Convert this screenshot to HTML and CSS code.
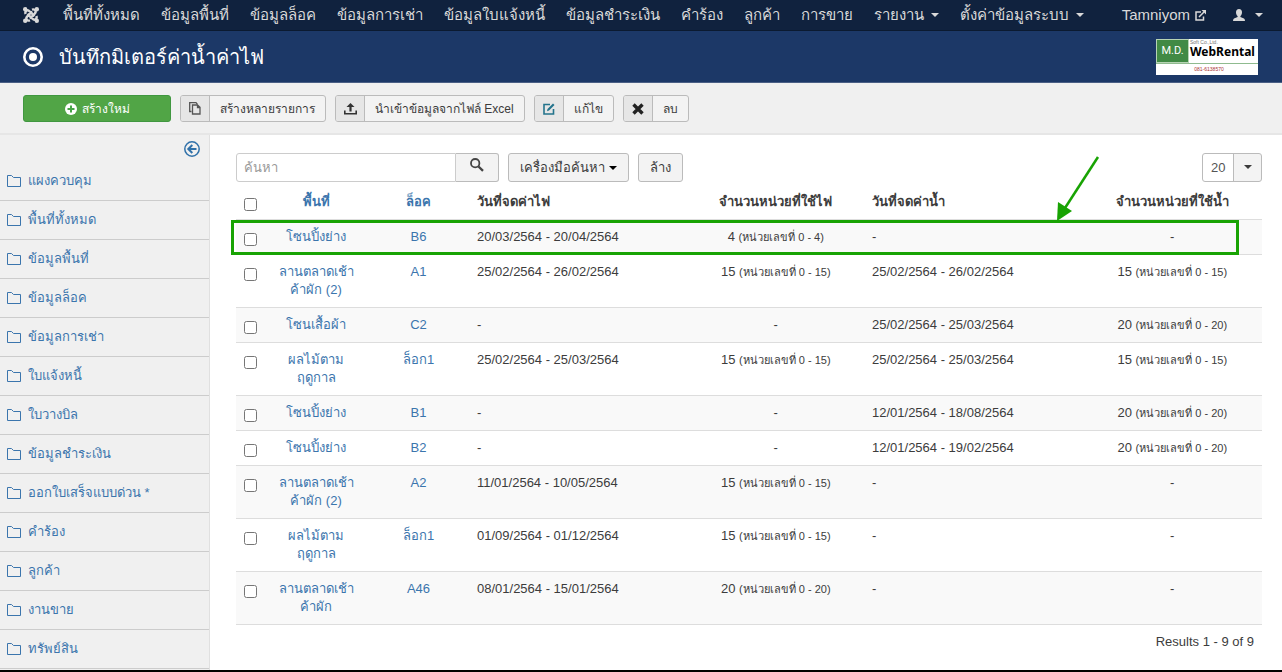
FILE: index.html
```html
<!DOCTYPE html>
<html lang="th">
<head>
<meta charset="utf-8">
<meta name="viewport" content="width=device-width, initial-scale=1">
<title>บันทึกมิเตอร์ค่าน้ำค่าไฟ</title>
<link rel="stylesheet" href="styles.css">
</head>
<body>
<svg class="defs" aria-hidden="true">
  <symbol id="folder" viewBox="0 0 14 12"><path d="M.5 11.500V.5H4.500L6.500 2.500H13.500V11.500Z" fill="none" stroke="currentColor"/></symbol>
</svg>
<nav class="navbar">
  <a class="brand" href="#" aria-label="Joomla">
    <svg width="16" height="16" viewBox="0 0 16 16" fill="none" stroke="currentColor" stroke-width="2.400">
      <g fill="currentColor" stroke="none"><circle cx="2.200" cy="2.200" r="2.200"/><circle cx="13.800" cy="2.200" r="2.200"/><circle cx="2.200" cy="13.800" r="2.200"/><circle cx="13.800" cy="13.800" r="2.200"/></g>
      <path d="M2.600 7C1.600 4 4.300 2 6.800 4.500L11.500 9.200M9 2.600C12 1.600 14 4.300 11.500 6.800L6.800 11.500M13.400 9C14.400 12 11.700 14 9.200 11.500L4.500 6.800M7 13.400C4 14.400 2 11.700 4.500 9.200L9.200 4.500"/>
    </svg>
  </a>
  <ul class="menu">
    <li><a href="#">พื้นที่ทั้งหมด</a></li>
    <li><a href="#">ข้อมูลพื้นที่</a></li>
    <li><a href="#">ข้อมูลล็อค</a></li>
    <li><a href="#">ข้อมูลการเช่า</a></li>
    <li><a href="#">ข้อมูลใบแจ้งหนี้</a></li>
    <li><a href="#">ข้อมูลชำระเงิน</a></li>
    <li><a href="#">คำร้อง</a></li>
    <li><a href="#">ลูกค้า</a></li>
    <li><a href="#">การขาย</a></li>
    <li><a href="#">รายงาน<span class="caret"></span></a></li>
    <li><a href="#">ตั้งค่าข้อมูลระบบ<span class="caret"></span></a></li>
  </ul>
  <div class="account">
    <a href="#">Tamniyom
      <svg width="11" height="11" viewBox="0 0 11 11" fill="none" stroke="currentColor" stroke-width="1.500"><path d="M6 2H1V10H8.500V6.500M4 7L9 2"/><path d="M6.500 0H11V4.500Z" fill="currentColor" stroke="none"/></svg>
    </a>
    <a href="#" aria-label="บัญชีผู้ใช้">
      <svg width="12" height="12" viewBox="0 0 12 12" fill="currentColor"><path d="M6 0C8 0 9 1.300 9 3.200C9 5 8.300 6.300 7.400 7V8L11 9.500Q12 10 12 12H0Q0 10 1 9.500L4.600 8V7C3.700 6.300 3 5 3 3.200C3 1.300 4 0 6 0Z"/></svg>
      <span class="caret"></span>
    </a>
  </div>
</nav>
<header class="header">
  <svg width="20" height="20" viewBox="0 0 20 20"><circle cx="10" cy="10" r="8.700" fill="none" stroke="#fff" stroke-width="2.600"/><circle cx="10" cy="10" r="4" fill="#fff"/></svg>
  <h1>บันทึกมิเตอร์ค่าน้ำค่าไฟ</h1>
  <div class="logo">
    <span class="logo-md">M.D.</span>
    <span class="logo-name"><small>Soft Co.,Ltd.</small><b>WebRental</b></span>
    <span class="logo-phone">081-6138570</span>
  </div>
</header>
<div class="toolbar">
  <button class="btn-new" type="button">
    <svg width="12" height="12" viewBox="0 0 12 12"><circle cx="6" cy="6" r="6" fill="#fff"/><path d="M6 2.500V9.500M2.500 6H9.500" stroke="#46a546" stroke-width="2"/></svg>
    สร้างใหม่
  </button>
  <button class="btn-tool" type="button">
    <span class="ico"><svg width="12" height="13" viewBox="0 0 12 13" fill="none" stroke="#555" stroke-width="1.300"><path d="M2.500 9.500H.7V.7H7L8.500 2.500"/><path d="M3.500 3H8.500L11 5.300V12H3.500ZM8.500 3V5.500H11"/></svg></span><span class="txt">สร้างหลายรายการ</span>
  </button>
  <button class="btn-tool" type="button">
    <span class="ico"><svg width="13" height="12" viewBox="0 0 13 12" fill="#333"><path d="M6.500 0L10.500 4H7.600V8.500H5.400V4H2.500ZM0 7.500H1.600V10H11.400V7.500H13V11.600H0Z"/></svg></span><span class="txt">นำเข้าข้อมูลจากไฟล์ Excel</span>
  </button>
  <button class="btn-tool" type="button">
    <span class="ico"><svg width="12" height="12" viewBox="0 0 12 12" fill="none" stroke="#24748c" stroke-width="1.600"><path d="M7 1.500H1V11H10.500V6"/><path d="M4 8.300L4.500 6L10 .5L11.500 2L6 7.500Z" fill="#24748c" stroke="none"/></svg></span><span class="txt">แก้ไข</span>
  </button>
  <button class="btn-tool" type="button">
    <span class="ico"><svg width="12" height="12" viewBox="0 0 12 12"><path d="M1.500 1.500L10.500 10.500M10.500 1.500L1.500 10.500" stroke="#222" stroke-width="3.400"/></svg></span><span class="txt">ลบ</span>
  </button>
</div>
<div class="content">
  <aside class="sidebar">
    <button class="collapse" type="button" aria-label="ซ่อนแถบข้าง">
      <svg width="16" height="16" viewBox="0 0 16 16" fill="none" stroke="currentColor"><circle cx="8" cy="8" r="7.200" stroke-width="1.500"/><path d="M12.500 8H4.500M8.300 4L4.300 8L8.300 12" stroke-width="2"/></svg>
    </button>
    <ul>
      <li><a href="#"><svg><use href="#folder"/></svg>แผงควบคุม</a></li>
      <li><a href="#"><svg><use href="#folder"/></svg>พื้นที่ทั้งหมด</a></li>
      <li><a href="#"><svg><use href="#folder"/></svg>ข้อมูลพื้นที่</a></li>
      <li><a href="#"><svg><use href="#folder"/></svg>ข้อมูลล็อค</a></li>
      <li><a href="#"><svg><use href="#folder"/></svg>ข้อมูลการเช่า</a></li>
      <li><a href="#"><svg><use href="#folder"/></svg>ใบแจ้งหนี้</a></li>
      <li><a href="#"><svg><use href="#folder"/></svg>ใบวางบิล</a></li>
      <li><a href="#"><svg><use href="#folder"/></svg>ข้อมูลชำระเงิน</a></li>
      <li><a href="#"><svg><use href="#folder"/></svg>ออกใบเสร็จแบบด่วน *</a></li>
      <li><a href="#"><svg><use href="#folder"/></svg>คำร้อง</a></li>
      <li><a href="#"><svg><use href="#folder"/></svg>ลูกค้า</a></li>
      <li><a href="#"><svg><use href="#folder"/></svg>งานขาย</a></li>
      <li><a href="#"><svg><use href="#folder"/></svg>ทรัพย์สิน</a></li>
    </ul>
  </aside>
  <main class="main">
    <form class="filters">
      <div class="search">
        <input type="text" placeholder="ค้นหา" aria-label="ค้นหา">
        <button type="button" aria-label="ค้นหา"><svg width="14" height="14" viewBox="0 0 14 14" fill="none" stroke="#444"><circle cx="5.200" cy="5.200" r="4.200" stroke-width="1.800"/><path d="M8.500 8.500L13 12.800" stroke-width="2.400"/></svg></button>
      </div>
      <button class="btn" type="button">เครื่องมือค้นหา<span class="caret"></span></button>
      <button class="btn" type="button">ล้าง</button>
      <div class="limit"><select aria-label="จำนวนต่อหน้า"><option>20</option></select><span class="caret"></span></div>
    </form>
    <div class="results">
      <table>
        <colgroup><col class="c-check"><col class="c-area"><col class="c-lock"><col class="c-date"><col class="c-unit"><col class="c-date"><col></colgroup>
        <thead>
          <tr><th><input type="checkbox" aria-label="เลือกทั้งหมด"></th><th><a href="#">พื้นที่</a></th><th><a href="#">ล็อค</a></th><th class="left">วันที่จดค่าไฟ</th><th>จำนวนหน่วยที่ใช้ไฟ</th><th class="left">วันที่จดค่าน้ำ</th><th>จำนวนหน่วยที่ใช้น้ำ</th></tr>
        </thead>
        <tbody>
          <tr><td><input type="checkbox" aria-label="เลือก B6"></td><td><a href="#">โซนปิ้งย่าง</a></td><td><a href="#">B6</a></td><td class="left">20/03/2564 - 20/04/2564</td><td>4 <small>(หน่วยเลขที่ 0 - 4)</small></td><td class="left">-</td><td>-</td></tr>
          <tr><td><input type="checkbox" aria-label="เลือก A1"></td><td><a href="#">ลานตลาดเช้าค้าผัก (2)</a></td><td><a href="#">A1</a></td><td class="left">25/02/2564 - 26/02/2564</td><td>15 <small>(หน่วยเลขที่ 0 - 15)</small></td><td class="left">25/02/2564 - 26/02/2564</td><td>15 <small>(หน่วยเลขที่ 0 - 15)</small></td></tr>
          <tr><td><input type="checkbox" aria-label="เลือก C2"></td><td><a href="#">โซนเสื้อผ้า</a></td><td><a href="#">C2</a></td><td class="left">-</td><td>-</td><td class="left">25/02/2564 - 25/03/2564</td><td>20 <small>(หน่วยเลขที่ 0 - 20)</small></td></tr>
          <tr><td><input type="checkbox" aria-label="เลือก ล็อก1"></td><td><a href="#">ผลไม้ตามฤดูกาล</a></td><td><a href="#">ล็อก1</a></td><td class="left">25/02/2564 - 25/03/2564</td><td>15 <small>(หน่วยเลขที่ 0 - 15)</small></td><td class="left">25/02/2564 - 25/03/2564</td><td>15 <small>(หน่วยเลขที่ 0 - 15)</small></td></tr>
          <tr><td><input type="checkbox" aria-label="เลือก B1"></td><td><a href="#">โซนปิ้งย่าง</a></td><td><a href="#">B1</a></td><td class="left">-</td><td>-</td><td class="left">12/01/2564 - 18/08/2564</td><td>20 <small>(หน่วยเลขที่ 0 - 20)</small></td></tr>
          <tr><td><input type="checkbox" aria-label="เลือก B2"></td><td><a href="#">โซนปิ้งย่าง</a></td><td><a href="#">B2</a></td><td class="left">-</td><td>-</td><td class="left">12/01/2564 - 19/02/2564</td><td>20 <small>(หน่วยเลขที่ 0 - 20)</small></td></tr>
          <tr><td><input type="checkbox" aria-label="เลือก A2"></td><td><a href="#">ลานตลาดเช้าค้าผัก (2)</a></td><td><a href="#">A2</a></td><td class="left">11/01/2564 - 10/05/2564</td><td>15 <small>(หน่วยเลขที่ 0 - 15)</small></td><td class="left">-</td><td>-</td></tr>
          <tr><td><input type="checkbox" aria-label="เลือก ล็อก1"></td><td><a href="#">ผลไม้ตามฤดูกาล</a></td><td><a href="#">ล็อก1</a></td><td class="left">01/09/2564 - 01/12/2564</td><td>15 <small>(หน่วยเลขที่ 0 - 15)</small></td><td class="left">-</td><td>-</td></tr>
          <tr><td><input type="checkbox" aria-label="เลือก A46"></td><td><a href="#">ลานตลาดเช้าค้าผัก</a></td><td><a href="#">A46</a></td><td class="left">08/01/2564 - 15/01/2564</td><td>20 <small>(หน่วยเลขที่ 0 - 20)</small></td><td class="left">-</td><td>-</td></tr>
        </tbody>
      </table>
      <div class="highlight"></div>
      <svg class="arrow" width="44" height="66" viewBox="0 0 44 66"><path d="M42 1L9 52" stroke="#18a303" stroke-width="2.500"/><path d="M1 65L2 46L16 55Z" fill="#18a303"/></svg>
    </div>
    <p class="count">Results 1 - 9 of 9</p>
  </main>
</div>
</body>
</html>
```
FILE: styles.css
```css
* { box-sizing: border-box; }
body {
  margin: 0;
  min-height: 100vh;
  display: flex;
  flex-direction: column;
  overflow: hidden;
  border-bottom: 2px solid #000;
  background: #fff;
  color: #3c3c3c;
  font: 13px/18px "Liberation Sans", Arial, sans-serif;
}
ul { list-style: none; margin: 0; padding: 0; }
a { color: #3b75ad; text-decoration: none; }
button, input, select { font: inherit; color: inherit; margin: 0; }
svg { flex: none; }
.defs { position: absolute; width: 0; height: 0; }
.caret {
  display: inline-block;
  border: 4px solid transparent;
  border-top-color: currentColor;
  border-bottom: 0;
}

.navbar {
  display: flex;
  align-items: center;
  height: 31px;
  padding: 0 19px 0 23px;
  border-bottom: 1px solid #0b1a30;
  background: #10223e;
  font-size: 15px;
  white-space: nowrap;
}
.navbar a { display: flex; align-items: center; color: #d9d9d9; }
.brand { margin-right: 14px; }
.menu { display: flex; gap: 1px; }
.menu a { padding: 0 10px; }
.menu .caret { margin-left: 7px; }
.account { display: flex; gap: 27px; margin-left: auto; }
.account a { gap: 5px; }
.account .caret { margin-left: 5px; }

.header {
  display: flex;
  align-items: center;
  gap: 16px;
  height: 52px;
  padding: 0 24px 0 23px;
  border-bottom: 1px solid #4a5f85;
  background: #1c3867;
}
.header h1 { margin: 0; color: #fff; font-size: 20px; font-weight: 400; line-height: 30px; }
.logo {
  display: grid;
  grid-template-columns: 33px 1fr;
  grid-template-rows: 24px 12px;
  width: 102px;
  margin-left: auto;
  background: #fff;
}
.logo-md {
  border: 1px solid #b7d3b4;
  background: #418a45;
  color: #fff;
  font: 11px/22px Roboto, sans-serif;
  text-align: center;
}
.logo-name { display: flex; flex-direction: column; padding-left: 1px; color: #000; }
.logo-name small { color: #777; font-size: 5px; line-height: 7px; }
.logo-name b { font: 700 12px/12px "Noto Sans", sans-serif; }
.logo-phone {
  grid-column: 1 / -1;
  border-top: 1px solid #8fbb8f;
  padding-left: 4px;
  color: #a33;
  font-size: 5px;
  line-height: 10px;
  text-align: center;
}

.toolbar {
  display: flex;
  gap: 9px;
  padding: 12px 23px 11px;
  border-bottom: 2px solid #e6e6e6;
  background: #f0f0f0;
  font-size: 12px;
}
.btn-new, .btn-tool { display: flex; align-items: center; height: 27px; border-radius: 3px; padding: 0; }
.btn-new {
  justify-content: center;
  gap: 5px;
  width: 148px;
  border: 1px solid #409740;
  background: #51a546;
  color: #fff;
}
.btn-tool { border: 1px solid #bbb; background: #f3f3f3; overflow: hidden; }
.ico {
  display: grid;
  place-items: center;
  align-self: stretch;
  width: 29px;
  border-right: 1px solid #bbb;
  background: #e6e6e6;
}
.txt { padding: 0 10px; }

.content { display: flex; flex: 1; }
.sidebar { width: 210px; border-right: 1px solid #e0e0e0; background: #f0f0f0; }
.collapse {
  display: block;
  margin: 6px 9px 5px auto;
  padding: 0;
  border: 0;
  background: none;
  color: #3071a9;
  line-height: 0;
}
.sidebar li { border-bottom: 1px solid #ccc; }
.sidebar a { display: flex; align-items: center; gap: 7px; height: 38px; padding-left: 7px; }
.sidebar a svg { width: 14px; height: 12px; }

.main { flex: 1; padding: 17px 20px 0 26px; }
.filters { display: flex; align-items: flex-end; gap: 9px; height: 33px; padding-bottom: 3px; }
.search { display: flex; }
.search input {
  width: 220px;
  height: 29px;
  padding: 0 7px;
  border: 1px solid #ccc;
  border-radius: 3px 0 0 3px;
}
.search input::placeholder { color: #999; }
.search button, .btn { border: 1px solid #bbb; background: #f3f3f3; }
.search button { width: 43px; padding: 0; border-left: 0; border-radius: 0 3px 3px 0; }
.btn { height: 29px; padding: 0 11px; border-radius: 3px; }
.btn .caret { margin-left: 4px; color: #000; vertical-align: middle; }
.limit { position: relative; margin-left: auto; }
.limit select {
  appearance: none;
  width: 60px;
  height: 29px;
  padding: 0 8px;
  border: 1px solid #bbb;
  border-radius: 3px;
  background: linear-gradient(to right, #fff 30px, #bbb 30px, #bbb 31px, #f3f3f3 31px);
  color: #555;
}
.limit .caret { position: absolute; right: 10px; top: 12px; pointer-events: none; }

.results { position: relative; }
table { width: 100%; table-layout: fixed; border-collapse: separate; border-spacing: 0; }
.c-check { width: 28px; }
.c-area { width: 104px; }
.c-lock { width: 101px; }
.c-date { width: 21.3%; }
.c-unit { width: 17.2%; }
th, td { padding: 8px; text-align: center; vertical-align: top; border-bottom: 1px solid #ddd; }
.left { text-align: left; }
tbody tr:nth-child(odd) { background: #f9f9f9; }
td small { font-size: 11px; line-height: 1; }
input[type="checkbox"] { display: block; width: 13px; height: 13px; margin: 5px 0 0; }
.highlight {
  position: absolute;
  top: 35px;
  left: -5px;
  right: 23px;
  height: 35px;
  border: 3px solid #18a303;
}
.arrow { position: absolute; top: -29px; right: 162px; }
.count { margin: 8px 8px 0; text-align: right; }
```
